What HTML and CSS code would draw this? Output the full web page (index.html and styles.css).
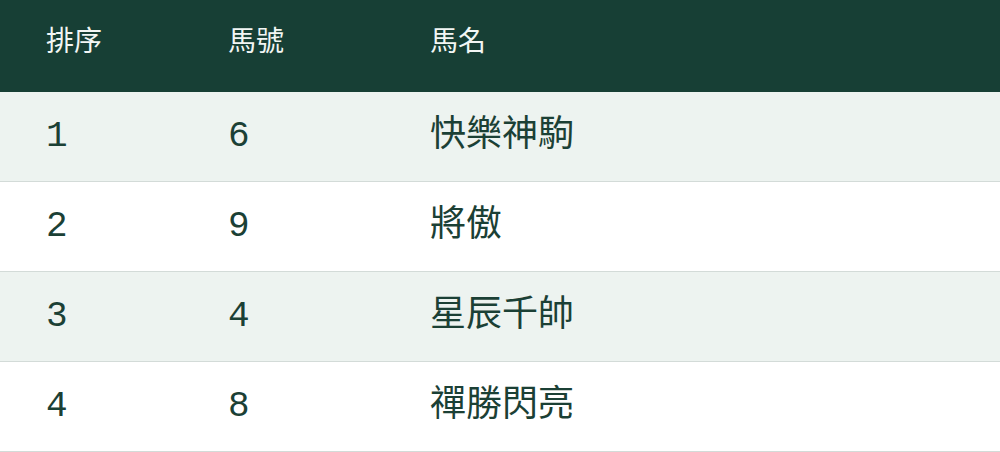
FILE: index.html
```html
<!DOCTYPE html>
<html lang="zh-Hant">
<head>
<meta charset="utf-8">
<link rel="stylesheet" href="styles.css">
</head>
<body>
<div class="table">
  <div class="row head">
    <div class="cell">排序</div>
    <div class="cell">馬號</div>
    <div class="cell">馬名</div>
  </div>
  <div class="row alt">
    <div class="cell">1</div>
    <div class="cell">6</div>
    <div class="cell">快樂神駒</div>
  </div>
  <div class="row">
    <div class="cell">2</div>
    <div class="cell">9</div>
    <div class="cell">將傲</div>
  </div>
  <div class="row alt">
    <div class="cell">3</div>
    <div class="cell">4</div>
    <div class="cell">星辰千帥</div>
  </div>
  <div class="row">
    <div class="cell">4</div>
    <div class="cell">8</div>
    <div class="cell">禪勝閃亮</div>
  </div>
</div>
</body>
</html>
```
FILE: styles.css
```css
html, body {
  margin: 0;
  padding: 0;
  background: #ffffff;
}
body {
  font-family: "Liberation Mono", "Noto Sans CJK TC", monospace;
  color: #1b4035;
}
.table {
  width: 1000px;
}
.row {
  display: grid;
  grid-template-columns: 182px 202px 1fr;
  align-items: center;
  height: 90px;
  box-sizing: border-box;
  border-bottom: 1px solid #d3dbd8;
  font-size: 36px;
  line-height: 1.2;
  background: #ffffff;
}
.row.alt {
  background: #edf3f0;
}
.row.head {
  height: 92px;
  background: #173f35;
  color: #f2f6f4;
  font-size: 28px;
  border-bottom: none;
  padding-bottom: 4px;
}
.cell {
  padding-left: 46px;
  white-space: nowrap;
}
```
